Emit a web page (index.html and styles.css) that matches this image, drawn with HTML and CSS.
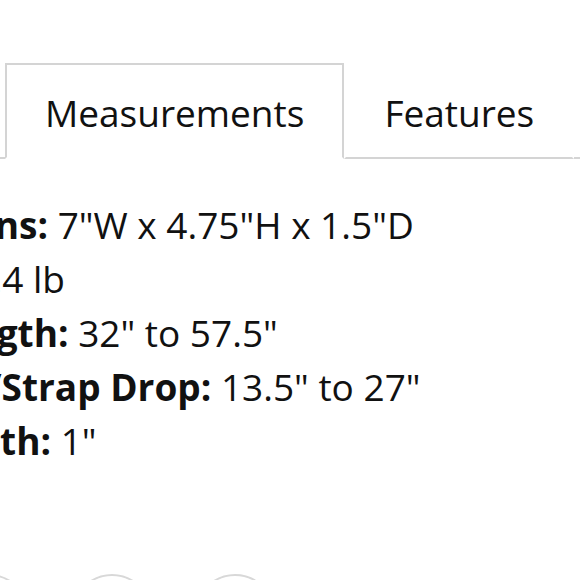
FILE: index.html
```html
<!DOCTYPE html>
<html>
<head>
<meta charset="utf-8">
<link rel="stylesheet" href="styles.css">
</head>
<body>
<div class="page">
  <div class="tabs">
    <div class="tab-spacer"></div>
    <div class="tab active">Measurements</div>
    <div class="tab">Features</div>
    <div class="tab-fill"></div>
  </div>
  <div class="specs">
    <p class="spec"><b>Dimensions:</b> 7"W x 4.75"H x 1.5"D</p>
    <p class="spec"><b>Weight:</b> 1.4 lb</p>
    <p class="spec"><b>Strap Length:</b> 32" to 57.5"</p>
    <p class="spec"><b>Shoulder/Strap Drop:</b> 13.5" to 27"</p>
    <p class="spec"><b>Strap Width:</b> 1"</p>
  </div>
  <div class="dots">
    <span class="dot"></span>
    <span class="dot"></span>
    <span class="dot"></span>
  </div>
</div>
</body>
</html>
```

FILE: styles.css
```css
html, body {
  margin: 0;
  padding: 0;
  background: #fff;
}
body {
  width: 580px;
  height: 580px;
  overflow: hidden;
  font-family: "Open Sans", "Noto Sans", sans-serif;
  color: #111;
}
.page {
  height: 580px;
  overflow: hidden;
  padding-top: 63px;
  box-sizing: border-box;
}
.tabs {
  display: flex;
  align-items: flex-end;
  font-size: 37px;
  line-height: 49px;
}
.tab-spacer {
  width: 5px;
  border-bottom: 2px solid #d4d4d4;
}
.tab {
  padding: 23px 38px 20px 38px;
  border: 2px solid transparent;
  border-bottom: 2px solid #d4d4d4;
  white-space: nowrap;
}
.tab.active {
  border-color: #d4d4d4;
  border-bottom-color: transparent;
}
.tab-fill {
  flex: 1;
  border-bottom: 2px solid #d4d4d4;
}
.specs {
  margin-top: 39px;
  margin-left: -179px;
  font-size: 37px;
  line-height: 54px;
}
.spec {
  margin: 0;
  white-space: nowrap;
}
.spec b {
  font-weight: 700;
}
.dots {
  display: flex;
  gap: 43px;
  margin-top: 106px;
  margin-left: -51px;
}
.dot {
  width: 76px;
  height: 76px;
  border-radius: 50%;
  border: 2px solid #d8d8d8;
  flex: none;
}
```
